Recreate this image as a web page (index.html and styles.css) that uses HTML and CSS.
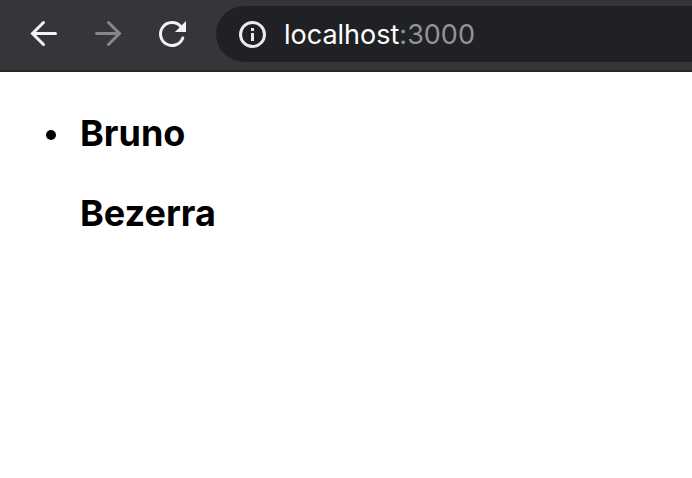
FILE: index.html
```html
<!DOCTYPE html>
<html lang="en">
<head>
<meta charset="utf-8">
<title>localhost:3000</title>
<link rel="stylesheet" href="styles.css">
</head>
<body>
<header class="toolbar">
  <button class="nav" type="button" aria-label="Back"><svg viewBox="0 0 32 32"><path d="M27.500 15.500H5M15.500 4.500l-11 11 11 11"/></svg></button>
  <button class="nav nav-off" type="button" aria-label="Forward" disabled><svg viewBox="0 0 32 32"><path d="M4.500 15.500H27M16.500 4.500l11 11-11 11"/></svg></button>
  <button class="nav" type="button" aria-label="Reload"><svg viewBox="0 0 32 32"><path d="M26.800 20A11.500 11.500 0 1 1 24.500 8.200L26 10"/><path class="solid" d="M30 3v11H19z"/></svg></button>
  <div class="address">
    <svg class="info" viewBox="0 0 28 28" aria-hidden="true"><circle cx="14.500" cy="14.500" r="12"/><path class="stem" d="M14.500 13v8M14.500 8v3"/></svg>
    <a class="url" href="#">localhost<span class="port">:3000</span></a>
  </div>
</header>
<main>
  <ul class="people">
    <li class="person">
      <div>
        <h3>Bruno</h3>
        <h3>Bezerra</h3>
      </div>
    </li>
  </ul>
</main>
</body>
</html>
```
FILE: styles.css
```css
body {
  margin: 0;
  background: #fff;
  color: #000;
  font-family: Inter, "Liberation Sans", sans-serif;
}
.toolbar {
  display: flex;
  align-items: center;
  gap: 32px;
  padding: 6px 0 8px 28px;
  background: #35363a;
  border-bottom: 2px solid #292527;
}
.nav {
  flex: none;
  width: 32px;
  height: 32px;
  padding: 0;
  border: 0;
  background: none;
  color: #f1f3f4;
}
.nav-off { color: #86878a; }
.nav svg {
  display: block;
  width: 32px;
  height: 32px;
}
svg {
  fill: none;
  stroke: currentColor;
  stroke-width: 3;
  stroke-linecap: round;
}
.solid {
  fill: currentColor;
  stroke: none;
}
.address {
  flex: 1;
  display: flex;
  align-items: center;
  gap: 18px;
  height: 56px;
  margin-left: -4px;
  padding-left: 22px;
  border-radius: 28px 0 0 28px;
  background: #202124;
  color: #e8eaed;
}
.info {
  width: 28px;
  height: 28px;
}
.stem { stroke-linecap: butt; }
.url {
  color: #fff;
  font-size: 27px;
  line-height: 37px;
  text-decoration: none;
}
.port { color: #939496; }
.people {
  margin: 0;
  padding: 39px 16px 39px 46px;
  list-style: none;
}
.person {
  display: flex;
  gap: 24px;
}
.person::before {
  content: "";
  width: 10px;
  height: 10px;
  margin-top: 19px;
  border-radius: 50%;
  background: #000;
}
h3 {
  margin: 0 0 36px;
  font-size: 36px;
  font-weight: 700;
  line-height: 44px;
}
```
